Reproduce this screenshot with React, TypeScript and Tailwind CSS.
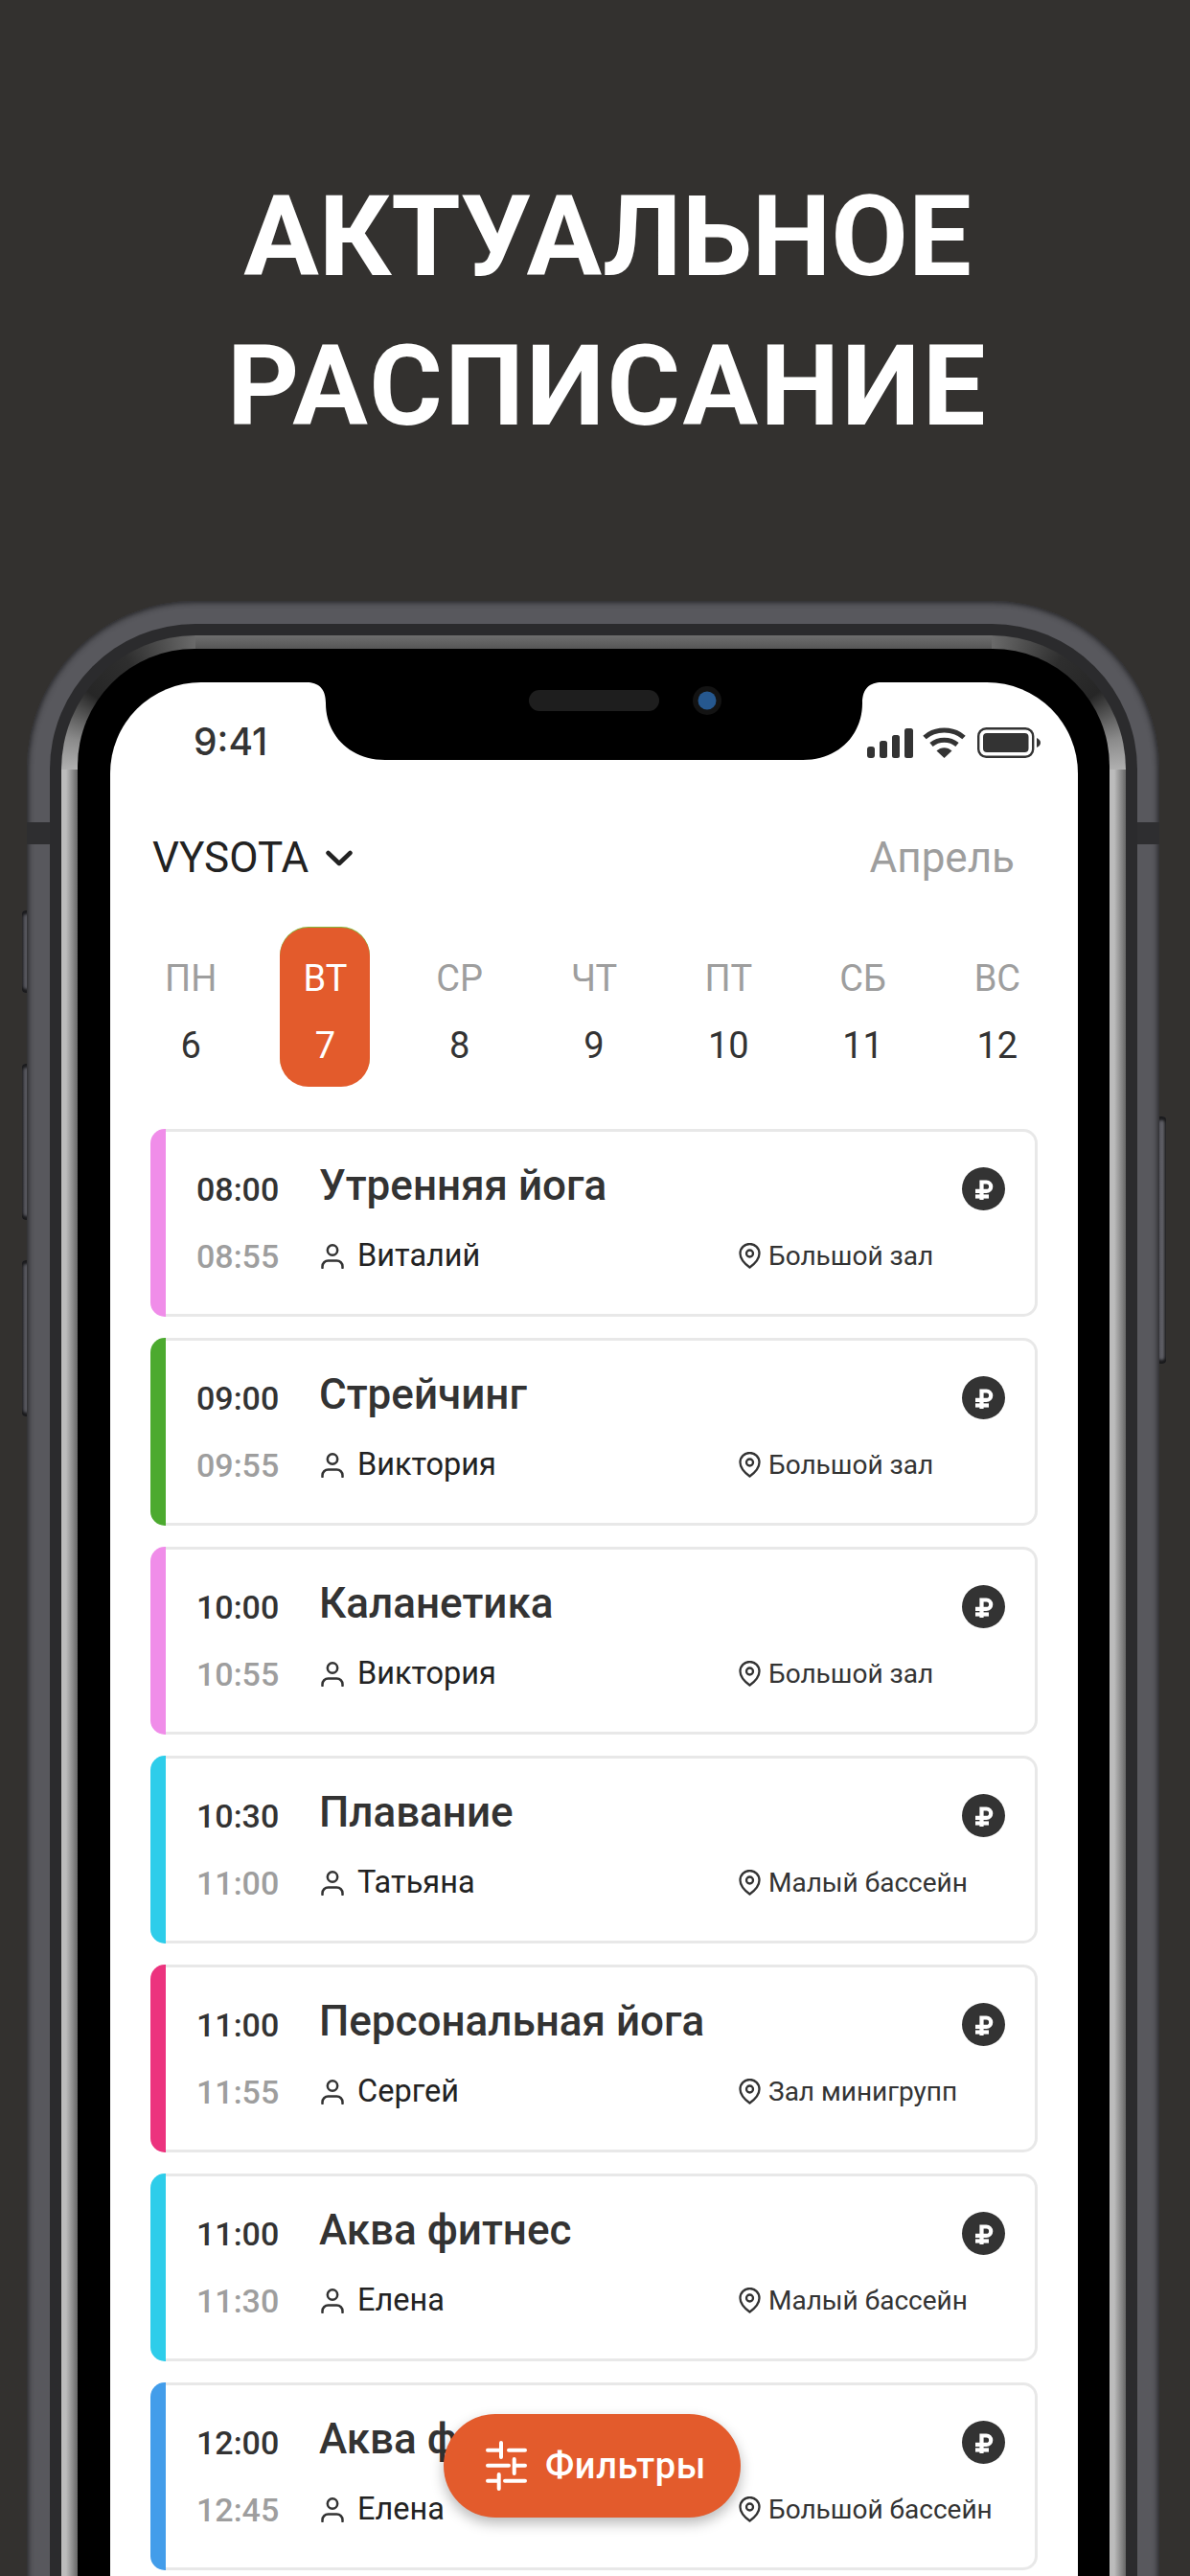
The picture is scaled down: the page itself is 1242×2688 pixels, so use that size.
const days = [
  { label: "ПН", num: "6" },
  { label: "ВТ", num: "7", active: true },
  { label: "СР", num: "8" },
  { label: "ЧТ", num: "9" },
  { label: "ПТ", num: "10" },
  { label: "СБ", num: "11" },
  { label: "ВС", num: "12" },
];

const lessons = [
  { start: "08:00", end: "08:55", title: "Утренняя йога", coach: "Виталий", room: "Большой зал", bar: "bg-[#f08de9]" },
  { start: "09:00", end: "09:55", title: "Стрейчинг", coach: "Виктория", room: "Большой зал", bar: "bg-[#4caa2f]" },
  { start: "10:00", end: "10:55", title: "Каланетика", coach: "Виктория", room: "Большой зал", bar: "bg-[#f08de9]" },
  { start: "10:30", end: "11:00", title: "Плавание", coach: "Татьяна", room: "Малый бассейн", bar: "bg-[#2ecdea]" },
  { start: "11:00", end: "11:55", title: "Персональная йога", coach: "Сергей", room: "Зал минигрупп", bar: "bg-[#ec337e]" },
  { start: "11:00", end: "11:30", title: "Аква фитнес", coach: "Елена", room: "Малый бассейн", bar: "bg-[#2ecdea]" },
  { start: "12:00", end: "12:45", title: "Аква фитнес", coach: "Елена", room: "Большой бассейн", bar: "bg-[#439dea]" },
];

function Person() {
  return (
    <svg width="24" height="26" viewBox="0 0 24 26" fill="none" stroke="#333" strokeWidth="2.5" strokeLinecap="round" className="shrink-0">
      <circle cx="12" cy="6.500" r="5.200" />
      <path d="M1.500 25v-1.500a6 6 0 0 1 6-6h9a6 6 0 0 1 6 6V25" />
    </svg>
  );
}

function Pin() {
  return (
    <svg width="23" height="27" viewBox="0 0 23 27" fill="none" stroke="#333" strokeWidth="2.3" strokeLinejoin="round" className="shrink-0">
      <path d="M11.500 25.500C6 21.500 1.500 16.500 1.500 11a10 10 0 0 1 20 0c0 5.500-4.500 10.500-10 14.500z" />
      <circle cx="11.500" cy="11" r="3.500" />
    </svg>
  );
}

function Ruble() {
  return (
    <div className="h-[45px] w-[45px] shrink-0 rounded-full bg-[#333333]">
      <svg width="45" height="45" viewBox="0 0 45 45" fill="none" stroke="#fff" strokeWidth="4.200">
        <path d="M20.500 34V15.500h5a4.700 4.700 0 0 1 0 9.400H14" />
        <path d="M14 30.500h14" />
      </svg>
    </div>
  );
}

function Card({ l }: { l: (typeof lessons)[number] }) {
  return (
    <div className="flex h-[196px]">
      <div className={`w-4 rounded-l-[15px] ${l.bar}`} />
      <div className="flex flex-1 flex-col gap-[34px] rounded-r-[15px] border-y-[3px] border-r-[3px] border-[#e8e8e8] bg-white pt-[37px] pl-[32px] pr-[31px]">
        <div className="flex h-[45px] items-center">
          <div className="w-[128px] text-[34px] leading-none font-[460] text-[#333333]">{l.start}</div>
          <div className="flex-1 -translate-y-[4px] text-[44px] leading-none font-medium text-[#333333]">{l.title}</div>
          <Ruble />
        </div>
        <div className="flex h-[27px] items-center">
          <div className="w-[130px] text-[34px] leading-none font-[460] text-[#9e9e9e]">{l.end}</div>
          <div className="flex w-[436px] items-center gap-[14px]">
            <Person />
            <span className="text-[32.500px] leading-none text-[#222222]">{l.coach}</span>
          </div>
          <div className="flex items-center gap-2">
            <Pin />
            <span className="text-[28px] leading-none text-[#333333]">{l.room}</span>
          </div>
        </div>
      </div>
    </div>
  );
}

function Status() {
  return (
    <div className="flex items-center justify-between pt-[42px] pl-[87px] pr-[39px]">
      <span className="font-['Inter',sans-serif] text-[39px] leading-[40px] font-medium text-[#333333]">9:41</span>
      <svg width="181" height="32" viewBox="0 0 181 32" className="translate-y-[1px]">
        <rect x="0" y="20" width="8" height="12" rx="3" fill="#333" />
        <rect x="13" y="14" width="8" height="18" rx="2.500" fill="#333" />
        <rect x="26" y="8" width="8" height="24" rx="2.500" fill="#333" />
        <rect x="39" y="1" width="9" height="31" rx="2.500" fill="#333" />
        <path d="M60 10.500C71 0.500 90 0.500 101 10.500" fill="none" stroke="#333" strokeWidth="5" />
        <path d="M67 18C74.500 11.500 86.500 11.500 94 18" fill="none" stroke="#333" strokeWidth="5" />
        <path d="M72.500 24.500C77 20 84 20 88.500 24.500L80.500 32Z" fill="#333" />
        <rect x="116.200" y="1.200" width="57" height="29.600" rx="8" fill="none" stroke="#333" strokeWidth="2.400" />
        <rect x="121" y="6" width="47.500" height="20" rx="4" fill="#333" />
        <path d="M177 11c2.500 1 4 3 4 5s-1.500 4-4 5z" fill="#333" />
      </svg>
    </div>
  );
}

function Notch() {
  return (
    <div className="absolute top-0 left-[205px] h-[81px] w-[600px]">
      <svg width="600" height="81" viewBox="0 0 600 81" className="absolute inset-0">
        <path d="M0 0c12 0 20 6 20 22 0 32 24 59 62 59h436c38 0 62-27 62-59 0-16 8-22 20-22z" fill="#000" />
        <circle cx="418" cy="19" r="15" fill="#131313" />
        <circle cx="418" cy="19" r="9.500" fill="#26588f" />
      </svg>
      <div className="absolute top-[8px] left-[232px] h-[22px] w-[136px] rounded-full bg-[#1e1e1e]" />
    </div>
  );
}

function Button({ className }: { className: string }) {
  return (
    <div className={`absolute w-[10px] rounded-[4px] bg-[linear-gradient(90deg,#44444a,#5f5f66_60%,#3a3a3e)] shadow-[inset_0_4px_3px_#1a1a1c,inset_0_-4px_3px_#1a1a1c] ${className}`} />
  );
}

export default function App() {
  return (
    <div className="h-[2688px] w-[1242px] overflow-hidden bg-[#33312f] font-['Roboto',sans-serif]">
      <h1 className="pt-[169px] pl-[26px] text-center text-[117px] leading-[156px] font-bold text-white">
        АКТУАЛЬНОЕ
        <br />
        <span className="tracking-[2.400px]">РАСПИСАНИЕ</span>
      </h1>
      <div className="relative mt-[146px] ml-[28px] h-[2300px] w-[1182px]">
        <Button className="top-[323px] -left-[5px] h-[86px]" />
        <Button className="top-[483px] -left-[5px] h-[163px]" />
        <Button className="top-[688px] -left-[5px] h-[163px]" />
        <Button className="top-[538px] -right-[7px] h-[258px]" />
        <div className="relative flex h-full flex-col rounded-[175px] bg-[#58585d] pt-[24px] pl-[24px] pr-[23px] shadow-[inset_0_0_6px_1px_#1b1b1d]">
          <div className="absolute top-[231px] left-0 h-[23px] w-[24px] bg-[#2e2e30]" />
          <div className="absolute top-[231px] right-0 h-[23px] w-[23px] bg-[#2e2e30]" />
          <div className="flex flex-1 flex-col rounded-[152px] bg-[#2b2b2d] pt-[12px] px-[12px]">
            <div className="flex flex-1 flex-col rounded-[140px] pt-[14px] px-[17px] [background:conic-gradient(from_270deg_at_100%_100%,#b0b0b0_0deg,#8a8a8a_14deg,#262626_36deg,#2e2e2e_58deg,#6a6a6a_90deg)_0_0/140px_140px_no-repeat,conic-gradient(from_0deg_at_0%_100%,#6a6a6a_0deg,#2e2e2e_32deg,#262626_54deg,#8a8a8a_76deg,#b0b0b0_90deg)_100%_0/140px_140px_no-repeat,linear-gradient(90deg,#bcbcbc_0,#bcbcbc_5px,#666_17px)_0_140px/17px_100%_no-repeat,linear-gradient(90deg,#bcbcbc_0,#bcbcbc_5px,#666_17px)_100%_140px/17px_100%_no-repeat,linear-gradient(180deg,#6e6e6e,#565656)_0_0/100%_14px_no-repeat,#666]">
              <div className="flex flex-1 flex-col rounded-[122px] bg-black pt-[35px] pl-[34px] pr-[33px]">
                <div className="relative flex-1 overflow-hidden rounded-[95px] bg-white">
                  <Notch />
                  <Status />
                  <div className="mt-[76px] flex h-[50px] items-center justify-between pl-[44px] pr-[66px]">
                    <div className="flex items-center gap-[18px]">
                      <span className="text-[44px] leading-[50px] text-[#222222]">VYSOTA</span>
                      <svg width="28" height="17" viewBox="0 0 28 17" fill="none" stroke="#222" strokeWidth="4.500" strokeLinecap="round" strokeLinejoin="round">
                        <path d="M2.500 3L14 14 25.500 3" />
                      </svg>
                    </div>
                    <span className="text-[44px] leading-[50px] text-[#9e9e9e]">Апрель</span>
                  </div>
                  <div className="mt-[48px] grid grid-cols-7 px-[14px]">
                    {days.map((d) => (
                      <div key={d.label} className="flex justify-center">
                        <div
                          className={
                            d.active
                              ? "flex h-[166px] w-[94px] flex-col items-center gap-[26px] rounded-[30px] bg-[#e35b2c] pt-[31px] shadow-[0_-1px_0_#86b83c]"
                              : "flex h-[166px] w-[94px] flex-col items-center gap-[26px] pt-[31px]"
                          }
                        >
                          <span className={d.active ? "text-[38px] leading-[44px] font-[450] text-white" : "text-[38px] leading-[44px] font-[450] text-[#9e9e9e]"}>{d.label}</span>
                          <span className={d.active ? "text-[38px] leading-[44px] font-[450] text-white" : "text-[38px] leading-[44px] font-[450] text-[#333333]"}>{d.num}</span>
                        </div>
                      </div>
                    ))}
                  </div>
                  <div className="mt-[44px] flex flex-col gap-[22px] px-[42px]">
                    {lessons.map((l) => (
                      <Card key={l.start + l.end} l={l} />
                    ))}
                  </div>
                  <div className="absolute top-[1807px] left-[348px] flex h-[108px] w-[310px] items-center gap-[18px] rounded-full bg-[#e35b2c] pl-[44px] shadow-[0_6px_14px_rgba(0,0,0,0.28)]">
                    <svg width="44" height="52" viewBox="0 0 44 52" fill="none" stroke="#fff" strokeWidth="4" strokeLinecap="round" className="shrink-0">
                      <path d="M2 9.700h14M16 2v15M24 9.700h17M2 25.700h22M29.700 19v15M30 25.700h11M2 41.700h11M13.700 35v15M20 41.700h21" />
                    </svg>
                    <span className="text-[38px] leading-none font-medium tracking-[0.6px] text-white">Фильтры</span>
                  </div>
                </div>
              </div>
            </div>
          </div>
        </div>
      </div>
    </div>
  );
}
